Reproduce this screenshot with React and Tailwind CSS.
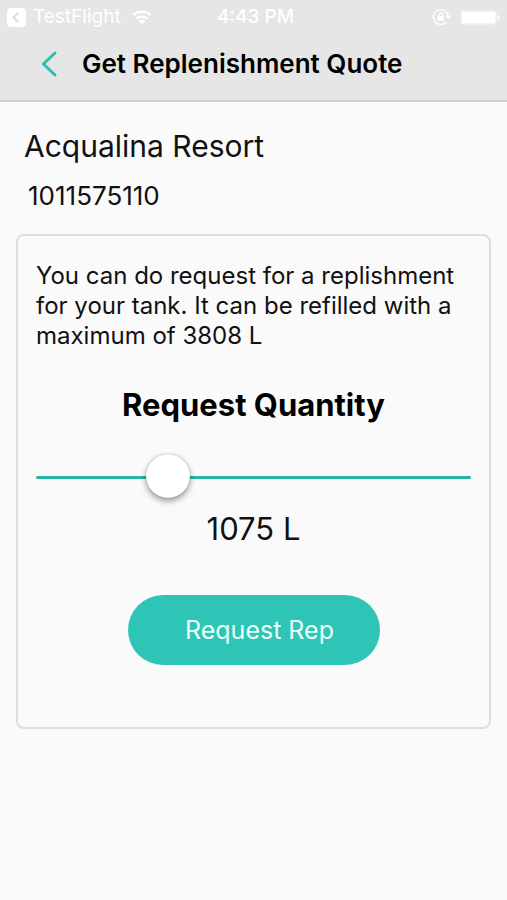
import React, { useState } from 'react';

const MAX_QUANTITY = 3808;

function StatusBar() {
  return (
    <div className="grid grid-cols-3 items-center h-[34px] px-[7px] text-white text-[19px] leading-6">
      <div className="flex items-center gap-[7px]">
        <svg className="shrink-0" width="19" height="19" viewBox="0 0 19 19" aria-hidden="true">
          <rect width="19" height="19" rx="4" fill="#fff" />
          <path d="M11.5 4.500 6.500 9.500l5 5" fill="none" stroke="#dcdcdc" strokeWidth="2" />
        </svg>
        <span>TestFlight</span>
        <svg className="ml-1 shrink-0" width="20" height="16" viewBox="0 0 20 16" fill="none" stroke="#fff" strokeWidth="2.2" aria-hidden="true">
          <path d="M1.2 6.2a12.4 12.4 0 0 1 17.6 0" />
          <path d="M4.5 9.6a7.8 7.8 0 0 1 11 0" />
          <path d="M10 15.2 6.9 12a4.4 4.4 0 0 1 6.2 0Z" fill="#fff" stroke="none" />
        </svg>
      </div>
      <span className="pl-1 text-center font-medium">4:43 PM</span>
      <div className="flex items-center justify-end gap-2">
        {/* Orientation lock */}
        <svg width="20" height="18" viewBox="0 0 20 18" fill="none" stroke="#fff" strokeWidth="1.3" aria-hidden="true">
          <path d="M16.2 8.2a7.4 7.4 0 1 0-2 6" />
          <path d="M13.6 7.8h5.2l-2.6 3.4Z" fill="#fff" stroke="none" />
          <rect x="5.6" y="8" width="6.4" height="5" rx="0.6" fill="#fff" stroke="none" />
          <path d="M7 8V6.6a1.8 1.8 0 0 1 3.6 0V8" />
        </svg>
        {/* Battery */}
        <svg width="40" height="15" viewBox="0 0 40 15" aria-hidden="true">
          <rect x="0.5" y="0.5" width="36" height="14" rx="3" fill="#fff" fillOpacity="0.6" />
          <rect x="2" y="2" width="33" height="11" rx="1.5" fill="#fff" />
          <path d="M37.5 5c1.6.4 2 1.4 2 2.5s-.4 2.1-2 2.5Z" fill="#fff" />
        </svg>
      </div>
    </div>
  );
}

export default function App() {
  const [quantity, setQuantity] = useState(1075);

  return (
    <div className="min-h-screen bg-[#fafafa] text-[#111] font-['Inter',sans-serif]">
      <header className="bg-[#e6e6e6] border-b-2 border-[#d2d2d2]">
        <StatusBar />
        <div className="flex items-center gap-[2px] h-[66px] pb-[6px] pl-10">
          <button type="button" aria-label="Back" className="w-10 h-10">
            <svg width="18" height="28" viewBox="0 0 18 28" fill="none" stroke="#2bbfae" strokeWidth="3" strokeLinecap="round" aria-hidden="true">
              <path d="M15 3 3.500 14 15 25" />
            </svg>
          </button>
          <h1 className="text-[26px] leading-8 font-semibold text-black">Get Replenishment Quote</h1>
        </div>
      </header>

      <main className="px-4 pt-6">
        <h2 className="px-2 text-[30px] leading-10">Acqualina Resort</h2>
        <p className="px-3 pt-[14px] text-[26px] leading-8">1011575110</p>

        <section className="mt-[22px] px-[18px] pt-[25px] pb-[62px] border-2 border-[#dedede] rounded-lg">
          <p className="text-[24px] leading-[30px]">
            {`You can do request for a replishment for your tank. It can be refilled with a maximum of ${MAX_QUANTITY} L`}
          </p>

          <label htmlFor="quantity" className="block mt-[34px] text-center text-[31px] leading-10 font-bold text-black">
            Request Quantity
          </label>
          <input
            id="quantity"
            type="range"
            min="0"
            max={MAX_QUANTITY}
            value={quantity}
            onChange={(e) => setQuantity(Number(e.target.value))}
            className="block w-full h-11 mt-[30px] appearance-none bg-transparent cursor-pointer focus:outline-none [&::-webkit-slider-runnable-track]:h-[3px] [&::-webkit-slider-runnable-track]:rounded-full [&::-webkit-slider-runnable-track]:bg-[#26b5a5] [&::-webkit-slider-thumb]:appearance-none [&::-webkit-slider-thumb]:size-11 [&::-webkit-slider-thumb]:-mt-[22px] [&::-webkit-slider-thumb]:rounded-full [&::-webkit-slider-thumb]:bg-white [&::-webkit-slider-thumb]:shadow-[0_0_1px_rgba(0,0,0,0.4),0_3px_6px_rgba(0,0,0,0.4)]"
          />
          <output htmlFor="quantity" className="block mt-[10px] text-center text-[31px] leading-10">
            {`${quantity} L`}
          </output>

          <button
            type="button"
            className="block mx-auto mt-[46px] h-[70px] w-[252px] pl-3 rounded-full bg-[#2fc5b6] text-[#e8fffb] text-[25px] leading-8"
          >
            Request Rep
          </button>
        </section>
      </main>
    </div>
  );
}
